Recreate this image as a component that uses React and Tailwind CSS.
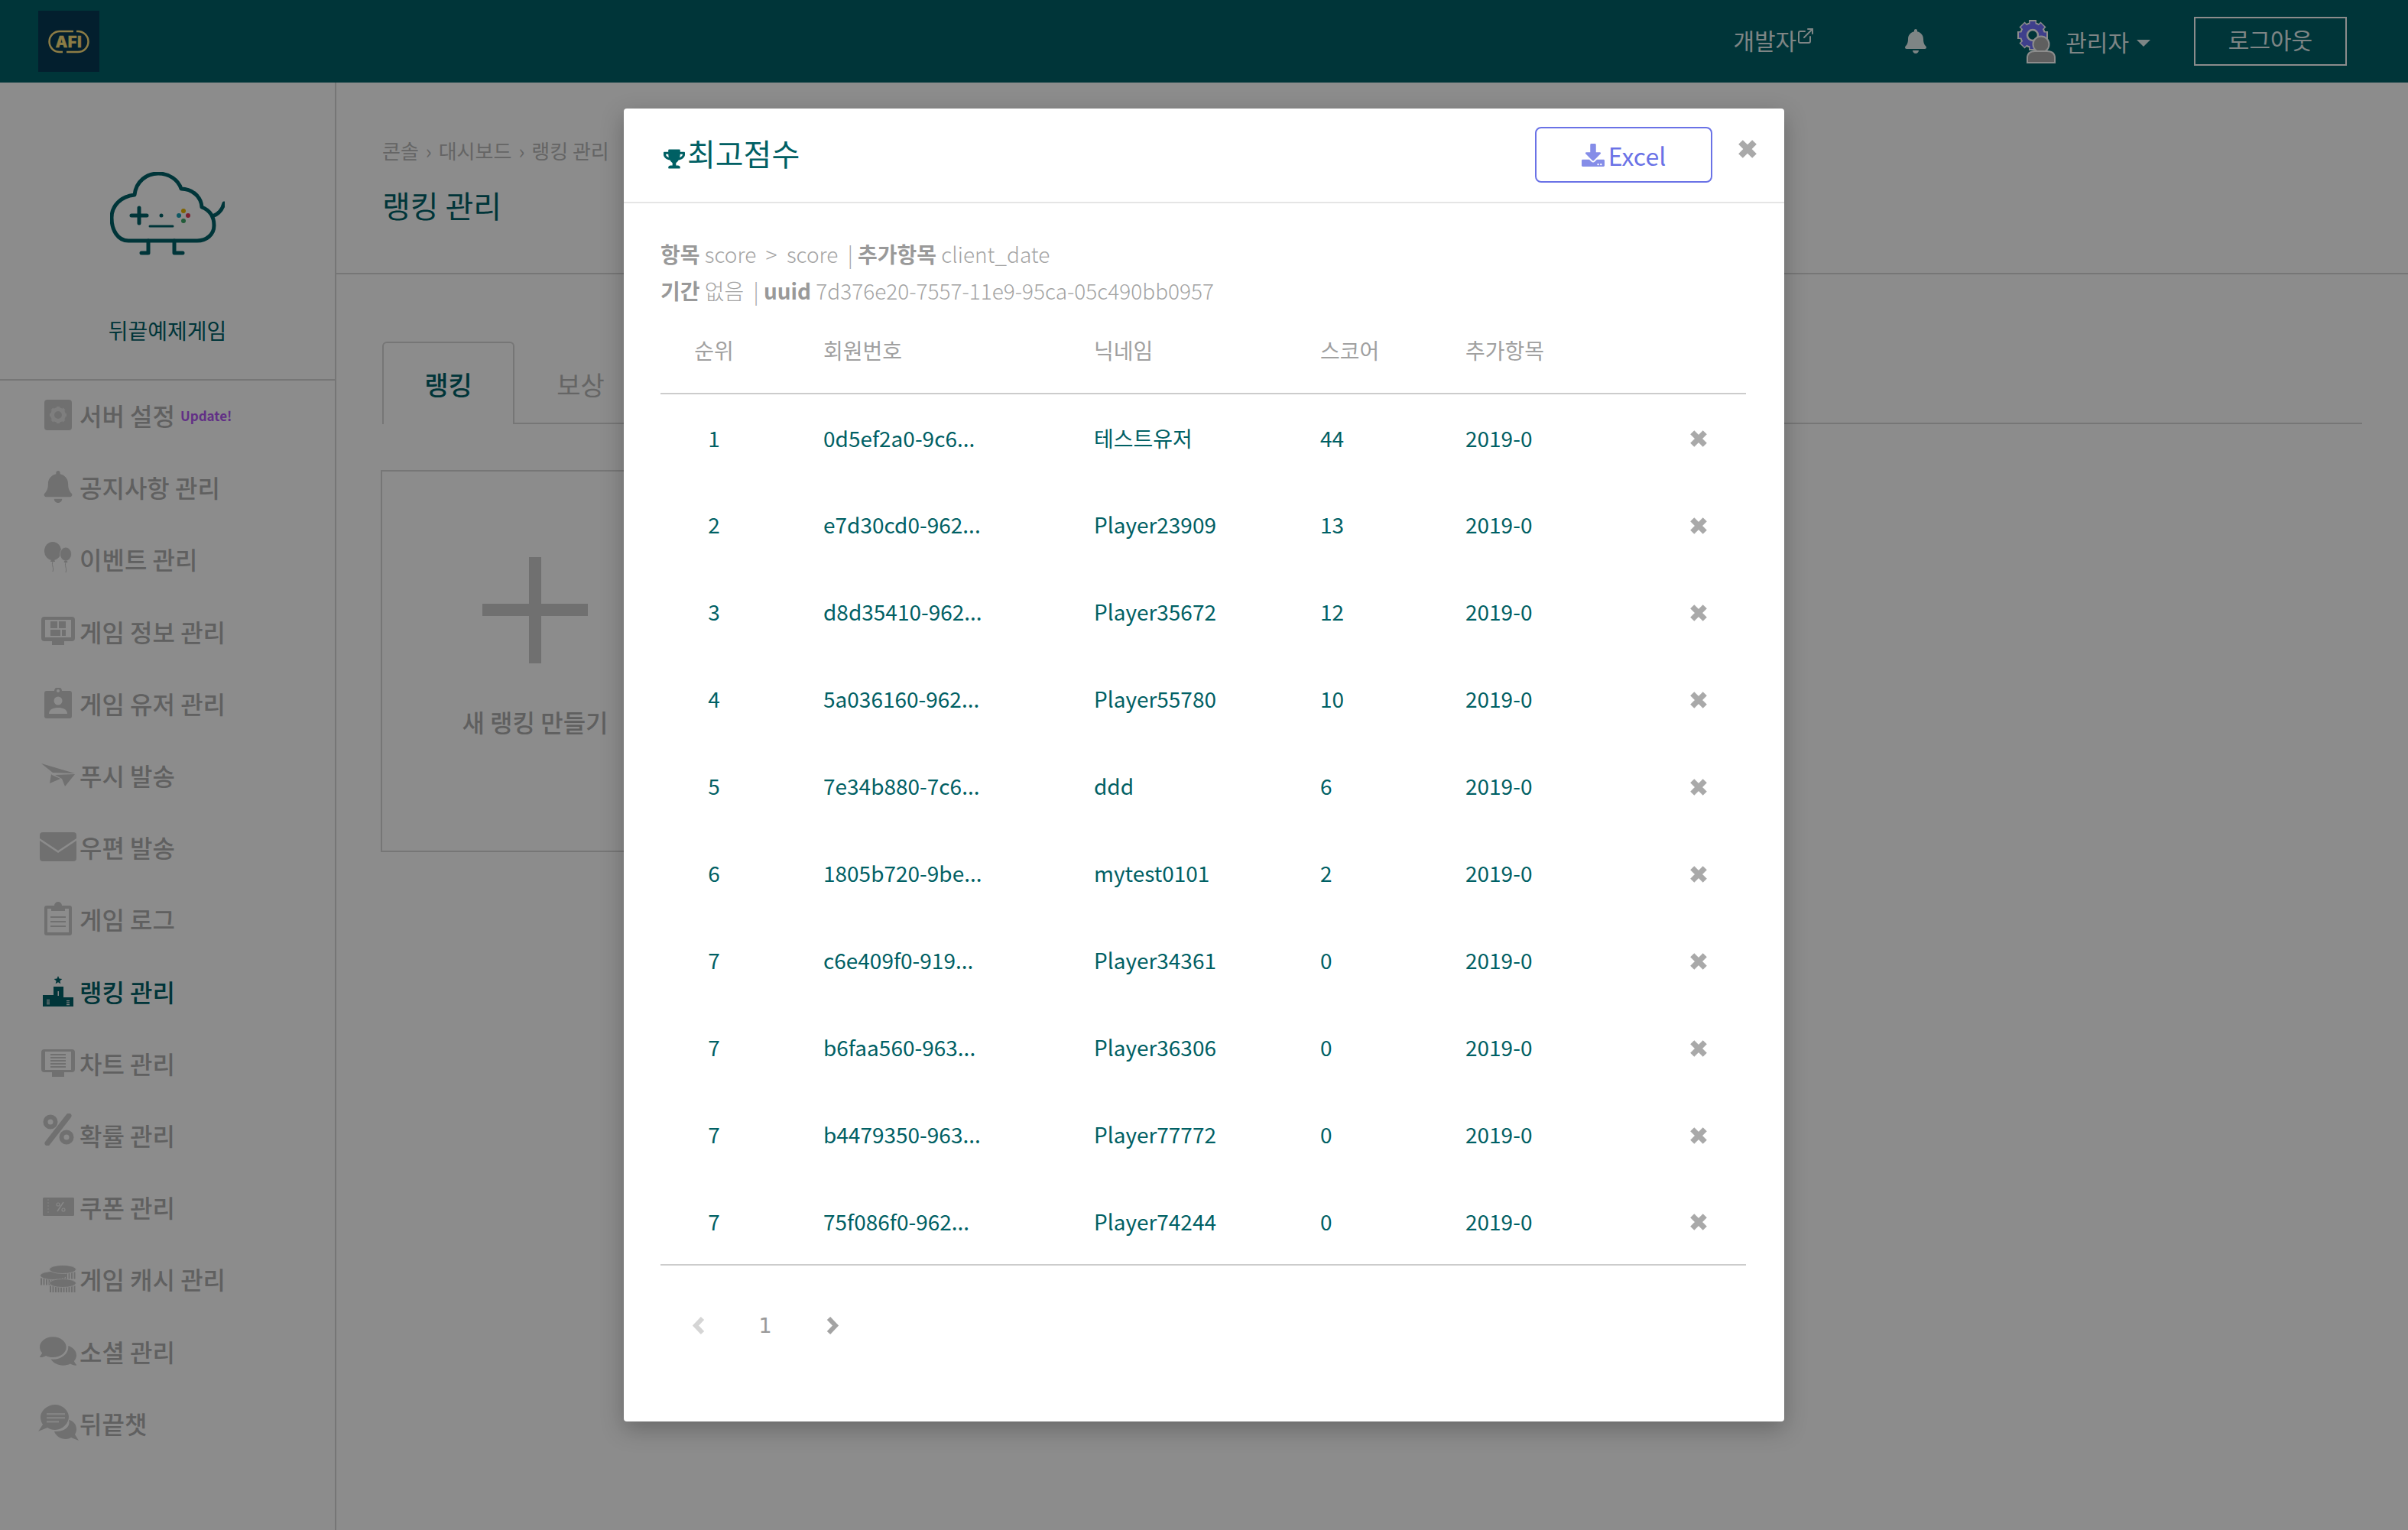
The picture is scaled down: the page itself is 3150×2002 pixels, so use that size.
import React from "react";
import { FaTrophy, FaBell, FaDownload, FaComments } from "react-icons/fa";
import { ExternalLink } from "lucide-react";

const rows = [
  { rank: 1, id: "0d5ef2a0-9c6...", name: "테스트유저", score: 44 },
  { rank: 2, id: "e7d30cd0-962...", name: "Player23909", score: 13 },
  { rank: 3, id: "d8d35410-962...", name: "Player35672", score: 12 },
  { rank: 4, id: "5a036160-962...", name: "Player55780", score: 10 },
  { rank: 5, id: "7e34b880-7c6...", name: "ddd", score: 6 },
  { rank: 6, id: "1805b720-9be...", name: "mytest0101", score: 2 },
  { rank: 7, id: "c6e409f0-919...", name: "Player34361", score: 0 },
  { rank: 7, id: "b6faa560-963...", name: "Player36306", score: 0 },
  { rank: 7, id: "b4479350-963...", name: "Player77772", score: 0 },
  { rank: 7, id: "75f086f0-962...", name: "Player74244", score: 0 },
];

const iconGray = "#cccccc";

function GearBox() {
  return (
    <svg width="36" height="40" viewBox="0 0 36 40">
      <rect width="36" height="40" rx="4" fill={iconGray} />
      <circle cx="18" cy="20" r="7.500" fill="none" stroke="#e6e6e6" strokeWidth="5" />
      <path d="M18 9v5M18 26v5M7 20h5M24 20h5M10 12l3.500 3.500M22.500 24.500L26 28M26 12l-3.500 3.500M13.500 24.500L10 28" stroke="#e6e6e6" strokeWidth="4" />
    </svg>
  );
}

function Balloons() {
  return (
    <svg width="36" height="44" viewBox="0 0 36 44" fill={iconGray}>
      <ellipse cx="11" cy="12" rx="11" ry="12" />
      <path d="M9 23h4l1 3H8z" />
      <path d="M11 26c-2 5 2 7 0 13" fill="none" stroke={iconGray} strokeWidth="1" />
      <ellipse cx="28" cy="16" rx="7.500" ry="9" stroke="#ffffff" strokeWidth="0.800" />
      <path d="M26.500 24.500h3l1 2.500h-5z" />
      <path d="M28 27c-2 5 2 7 0 13" fill="none" stroke={iconGray} strokeWidth="1" />
    </svg>
  );
}

function MonitorGrid() {
  return (
    <svg width="44" height="37" viewBox="0 0 44 37" fill={iconGray}>
      <path fillRule="evenodd" d="M4 0h36a4 4 0 0 1 4 4v24a4 4 0 0 1-4 4H4a4 4 0 0 1-4-4V4a4 4 0 0 1 4-4zm1 4v23h34V4z" />
      <rect x="14" y="32" width="16" height="5" />
      <rect x="12" y="6" width="9" height="9" />
      <rect x="23" y="6" width="9" height="9" />
      <rect x="12" y="17" width="13" height="8" />
      <rect x="27" y="17" width="5" height="8" />
    </svg>
  );
}

function Badge() {
  return (
    <svg width="36" height="40" viewBox="0 0 36 40" fill={iconGray}>
      <path fillRule="evenodd" d="M3 4h10a5 5 0 0 1 10 0h10a3 3 0 0 1 3 3v30a3 3 0 0 1-3 3H3a3 3 0 0 1-3-3V7a3 3 0 0 1 3-3zm15-2a2 2 0 1 0 0 4 2 2 0 0 0 0-4z" />
      <circle cx="18" cy="17" r="5.500" fill="#ffffff" />
      <path d="M6 34c0-6 6-8 12-8s12 2 12 8z" fill="#ffffff" />
    </svg>
  );
}

function Plane() {
  return (
    <svg width="44" height="30" viewBox="0 0 44 30" fill={iconGray}>
      <path d="M0 0L44 13L15 12Z" />
      <path d="M0 2L13 14L11 26L25 20L14 15Z" />
      <path d="M44 14L18 15L27 20L31 30Z" />
    </svg>
  );
}

function Mail() {
  return (
    <svg width="48" height="38" viewBox="0 0 48 38" fill={iconGray}>
      <path d="M4 0h40a4 4 0 0 1 4 4v4L24 24 0 8V4a4 4 0 0 1 4-4z" />
      <path d="M0 11l24 16 24-16v23a4 4 0 0 1-4 4H4a4 4 0 0 1-4-4z" />
    </svg>
  );
}

function Clipboard() {
  return (
    <svg width="36" height="44" viewBox="0 0 36 44" fill={iconGray}>
      <path fillRule="evenodd" d="M3 5h10a5 5 0 0 1 10 0h10a3 3 0 0 1 3 3v33a3 3 0 0 1-3 3H3a3 3 0 0 1-3-3V8a3 3 0 0 1 3-3zm1 4v31h28V9z" />
      <path d="M9 7h18v5H9z" />
      <path d="M8 19h20v2H8zM8 25h20v2H8zM8 31h20v2H8z" />
    </svg>
  );
}

function Podium() {
  return (
    <svg width="40" height="40" viewBox="0 0 40 40" fill="#006269">
      <path d="M20 0l1.500 3.500 3.800.4-2.900 2.500.9 3.800L20 8.200l-3.300 2 .9-3.800-2.900-2.500 3.800-.4z" />
      <rect x="14" y="14" width="13" height="26" />
      <rect x="0" y="25" width="14" height="15" />
      <rect x="27" y="28" width="13" height="12" />
      <path d="M19.500 20h1.500v6h-1.500zM5 31h4v1.200H5zM5 33.500h4v1.200H5zM5 36h4v1.200H5zM31 32h4v1.200h-4zM31 34.500h4v1.200h-4zM31 37h4v1.200h-4z" fill="#eeeeee" />
    </svg>
  );
}

function ChartBoard() {
  return (
    <svg width="44" height="36" viewBox="0 0 44 36" fill={iconGray}>
      <path fillRule="evenodd" d="M4 0h36a4 4 0 0 1 4 4v22a4 4 0 0 1-4 4H4a4 4 0 0 1-4-4V4a4 4 0 0 1 4-4zm1 3v24h34V3z" />
      <rect x="14" y="30" width="16" height="6" />
      <path d="M12 6h20v2H12zM12 10h20v2H12zM12 14h20v2H12zM12 18h20v2H12zM12 22h20v2H12z" />
    </svg>
  );
}

function Percent() {
  return (
    <svg width="41" height="42" viewBox="0 0 41 42" fill="none" stroke={iconGray} className="mb-[14px]">
      <path d="M34 3L6 39" strokeWidth="7" strokeLinecap="round" />
      <circle cx="10" cy="11" r="6.500" strokeWidth="6" />
      <circle cx="31" cy="31" r="6.500" strokeWidth="6" />
    </svg>
  );
}

function Coupon() {
  return (
    <svg width="41" height="24" viewBox="0 0 41 24">
      <rect width="41" height="24" rx="1.500" fill={iconGray} />
      <path d="M7 2v20" stroke="#eeeeee" strokeWidth="1" strokeDasharray="2 2" />
      <path d="M19 18l8-12" stroke="#f6f6f6" strokeWidth="1.500" />
      <circle cx="20" cy="9" r="2" fill="none" stroke="#f6f6f6" strokeWidth="1.200" />
      <circle cx="27" cy="16" r="2" fill="none" stroke="#f6f6f6" strokeWidth="1.200" />
    </svg>
  );
}

function Coin({ cx, cy }) {
  return (
    <g>
      <path d={`M${cx - 17} ${cy + 8}H${cx + 17}`} stroke={iconGray} strokeWidth="9" strokeDasharray="2 1.500" />
      <ellipse cx={cx} cy={cy} rx="17.500" ry="5.500" fill={iconGray} stroke="#ffffff" strokeWidth="0.800" />
    </g>
  );
}

function Coins() {
  return (
    <svg width="48" height="36" viewBox="0 0 48 36">
      <Coin cx={18} cy={14} />
      <Coin cx={30} cy={24} />
      <Coin cx={30} cy={6} />
    </svg>
  );
}

function ChatDots() {
  return (
    <svg width="53" height="48" viewBox="0 0 53 48" fill={iconGray}>
      <path d="M22 0c10 0 18 8 18 16s-8 17-18 17c-4 0-7-1-10-3L0 35l6-9c-2-3-3-6-3-10C3 8 12 0 22 0z" />
      <path d="M40 20c6 1 10 6 10 12 0 3-1 5-2 7l5 8-10-4c-2 1-4 2-7 2-7 0-13-4-15-10 11 1 22-5 19-15z" />
      <path d="M11 11h24v2.500H11zM11 16h24v2.500H11zM11 21h16v2.500H11z" fill="#eeeeee" />
    </svg>
  );
}

function CloseX({ className }) {
  return (
    <svg viewBox="0 0 24 24" fill="none" stroke="#a9a9a9" strokeWidth="8" className={className}>
      <path d="M3 3l18 18M21 3L3 21" />
    </svg>
  );
}

function ChevronLeft({ className }) {
  return (
    <svg width="17" height="25" viewBox="0 0 17 25" fill="none" stroke="currentColor" strokeWidth="6" className={className}>
      <path d="M14 3L5 12.500L14 22" />
    </svg>
  );
}

function ChevronRight({ className }) {
  return (
    <svg width="17" height="25" viewBox="0 0 17 25" fill="none" stroke="currentColor" strokeWidth="6" className={className}>
      <path d="M3 3L12 12.500L3 22" />
    </svg>
  );
}

const navItems = [
  { label: "서버 설정", icon: <GearBox />, update: true },
  { label: "공지사항 관리", icon: <FaBell className="text-[42px] text-[#cccccc]" /> },
  { label: "이벤트 관리", icon: <Balloons /> },
  { label: "게임 정보 관리", icon: <MonitorGrid /> },
  { label: "게임 유저 관리", icon: <Badge /> },
  { label: "푸시 발송", icon: <Plane /> },
  { label: "우편 발송", icon: <Mail /> },
  { label: "게임 로그", icon: <Clipboard /> },
  { label: "랭킹 관리", icon: <Podium />, active: true },
  { label: "차트 관리", icon: <ChartBoard /> },
  { label: "확률 관리", icon: <Percent /> },
  { label: "쿠폰 관리", icon: <Coupon /> },
  { label: "게임 캐시 관리", icon: <Coins /> },
  { label: "소셜 관리", icon: <FaComments className="text-[48px] text-[#cccccc]" /> },
  { label: "뒤끝챗", icon: <ChatDots /> },
];

function CloudLogo() {
  return (
    <svg width="150" height="110" viewBox="0 0 150 110" fill="none" stroke="#006269" strokeWidth="5" strokeLinecap="round" strokeLinejoin="round">
      <path d="M24 90C10 90 2 76 2 60c0-16 12-28 30-30C34 12 48 2 63 2c14 0 26 8 30 20 14 0 26 10 27 24 10 4 16 12 16 24 0 12-10 20-22 20z" />
      <path d="M134 58c8-3 13-9 15-17" />
      <path d="M50 90v16h-9M84 90v16h11" />
      <path d="M38 47v20M28 57h20" />
      <path d="M52 71h30" strokeWidth="3" />
      <circle cx="67" cy="57" r="2.500" fill="#006269" stroke="none" />
      <circle cx="96" cy="51" r="3" fill="#e8b400" stroke="none" />
      <circle cx="90" cy="57" r="3" fill="#1aa0b4" stroke="none" />
      <circle cx="102" cy="57" r="3" fill="#e03a58" stroke="none" />
      <circle cx="96" cy="64" r="3" fill="#3fa86a" stroke="none" />
    </svg>
  );
}

function AfiLogo() {
  return (
    <div className="w-[80px] h-[80px] bg-[#073a55] flex items-center justify-center">
      <svg width="56" height="31" viewBox="0 0 56 31" fill="none" stroke="#ffe27f" strokeWidth="2.500">
        <path d="M34 2H16a13.500 13.500 0 0 0 0 27h4M25 29h15a13.500 13.500 0 0 0 0-27h-2" />
        <text x="28" y="22.500" textAnchor="middle" fontSize="20" fontWeight="800" letterSpacing="0.500" fill="#ffe27f" stroke="#ffe27f" strokeWidth="0.500" fontFamily="Inter, sans-serif">AFI</text>
      </svg>
    </div>
  );
}

function AdminIcon() {
  return (
    <svg width="52" height="58" viewBox="0 0 52 58" className="block">
      <g stroke="#ffffff" fill="#ffffff">
        <circle cx="22" cy="21" r="15.500" strokeWidth="3" />
        <path d="M22 1v40M2 21h40M8 7l28 28M36 7L8 35" strokeWidth="10" />
      </g>
      <circle cx="22" cy="21" r="15" fill="#7373ff" />
      <path d="M22 3v36M4 21h36M9 8l26 26M35 8L9 34" stroke="#7373ff" strokeWidth="7" />
      <circle cx="22" cy="21" r="7" fill="#006269" stroke="#ffffff" strokeWidth="2.500" />
      <circle cx="33" cy="33" r="10.500" fill="#aeaeae" stroke="#ffffff" strokeWidth="2" />
      <path d="M15 57v-6c0-6 4-9 10-9h16c6 0 10 3 10 9v6z" fill="#aeaeae" stroke="#ffffff" strokeWidth="2" />
    </svg>
  );
}

export default function App() {
  return (
    <div className="relative h-screen overflow-hidden bg-white font-['Noto_Sans_CJK_KR','Noto_Sans',sans-serif]">
      <header className="h-[108px] bg-[#006269] flex items-center pl-[50px] pr-[80px]">
        <AfiLogo />
        <div className="ml-auto flex items-center text-[#e6f2f2] text-[30px]">
          <span className="flex items-start mb-[4px]">
            개발자
            <ExternalLink className="w-[24px] h-[24px] mt-[5px]" strokeWidth={2} />
          </span>
          <FaBell className="ml-[116px] text-[32px] text-[#e6f2f2]" />
          <span className="ml-[115px]"><AdminIcon /></span>
          <span className="ml-[13px]">관리자</span>
          <span className="ml-[10px] mt-[4px] w-0 h-0 border-x-[9px] border-x-transparent border-t-[9px] border-t-[#e6f2f2]" />
          <button className="ml-[57px] w-[200px] h-[64px] border-2 border-[#ffffff] text-[#e6f2f2] pb-[6px]">로그아웃</button>
        </div>
      </header>

      <div className="flex h-[1894px]">
        <aside className="w-[440px] shrink-0 border-r-2 border-[#d8d8d8]">
          <div className="h-[390px] border-b-2 border-[#d8d8d8] flex flex-col items-center">
            <div className="mt-[117px]"><CloudLogo /></div>
            <p className="mt-[76px] text-[28px] text-[#006269]">뒤끝예제게임</p>
          </div>
          <nav className="-mt-[2px]">
            {navItems.map((item) => (
              <div key={item.label} className="h-[94.2px] flex items-center pl-[48px]">
                <span className="w-[56px] flex justify-center shrink-0">{item.icon}</span>
                <span className={item.active ? "text-[32px] text-[#006269] font-medium" : "text-[32px] text-[#b0b0b0] font-medium"}>{item.label}</span>
                {item.update && <span className="ml-[7px] mt-[2px] text-[17px] font-bold text-[#b257f5]">Update!</span>}
              </div>
            ))}
          </nav>
        </aside>

        <main className="flex-1">
          <div className="h-[251px] border-b-2 border-[#d8d8d8] pl-[60px] pt-[66px]">
            <p className="flex items-center gap-[9px] text-[26px] text-[#b8b8b8] leading-[46px]">
              <span>콘솔</span>
              <span>›</span>
              <span>대시보드</span>
              <span>›</span>
              <span>랭킹 관리</span>
            </p>
            <h1 className="mt-[18px] text-[40px] text-[#006269]">랭킹 관리</h1>
          </div>
          <div className="pl-[60px] pr-[60px] pt-[90px]">
            <div className="flex items-end border-b-2 border-[#d8d8d8] h-[106px]">
              <div className="w-[173px] h-[108px] -mb-[2px] border-2 border-b-0 border-[#d8d8d8] rounded-t-[6px] bg-white flex items-center justify-center text-[34px] text-[#006269] font-medium">랭킹</div>
              <div className="w-[173px] h-[106px] pt-[4px] flex items-center justify-center text-[34px] text-[#b8b8b8]">보상</div>
            </div>
            <div className="-ml-[2px] mt-[60px] w-[404px] h-[500px] border-2 border-[#d8d8d8] flex flex-col items-center">
              <div className="relative mt-[112px] w-[138px] h-[139px]">
                <div className="absolute left-[61px] top-0 w-[16px] h-[139px] bg-[#cccccc]" />
                <div className="absolute left-0 top-[61px] w-[138px] h-[16px] bg-[#cccccc]" />
              </div>
              <p className="mt-[52px] text-[32px] text-[#aeaeae] font-medium">새 랭킹 만들기</p>
            </div>
          </div>
        </main>
      </div>

      <div className="absolute inset-0 bg-black/45">
        <div className="mx-auto mt-[142px] w-[1518px] h-[1718px] bg-white rounded-[4px] shadow-[0_10px_30px_rgba(0,0,0,0.25)]">
          <div className="h-[124px] border-b-2 border-[#e5e5e5] flex items-start pl-[52px] pr-[36px]">
            <FaTrophy className="mt-[52px] text-[28px] text-[#006064]" />
            <h2 className="ml-[3px] mt-[28px] text-[40px] leading-[60px] text-[#006064]">최고점수</h2>
            <button className="ml-auto mt-[24px] w-[232px] h-[73px] border-2 border-[#6a72e6] rounded-[8px] flex items-center justify-center text-[32px] text-[#6a72e6]">
              <FaDownload className="text-[30px] text-[#858de8] mr-[5px]" />
              Excel
            </button>
            <CloseX className="ml-[34px] mt-[41px] w-[24px] h-[24px]" />
          </div>

          <div className="px-[48px]">
            <div className="pt-[42px] text-[#a4a4a4] text-[28px] leading-[48px] font-light">
              <p><b className="font-bold text-[#999999]">항목</b> score &nbsp;&gt;&nbsp; score &nbsp;|&nbsp;<b className="font-bold text-[#999999]">추가항목</b> client_date</p>
              <p><b className="font-bold text-[#999999]">기간</b> 없음 &nbsp;|&nbsp;<b className="font-bold text-[#999999]">uuid</b> 7d376e20-7557-11e9-95ca-05c490bb0957</p>
            </div>

            <table className="w-[1420px] table-fixed text-[28px] text-[#006064]">
              <thead>
                <tr className="h-[111px] border-b-2 border-[#cccccc] text-[#a0a0a0] text-left">
                  <th className="w-[213px] pr-[73px] pb-[3px] text-center font-normal">순위</th>
                  <th className="w-[354px] pb-[3px] font-normal">회원번호</th>
                  <th className="w-[296px] pb-[3px] font-normal">닉네임</th>
                  <th className="w-[190px] pb-[3px] font-normal">스코어</th>
                  <th className="w-[264px] pb-[3px] font-normal">추가항목</th>
                  <th className="pb-[3px]" />
                </tr>
              </thead>
              <tbody className="border-b-2 border-[#cccccc]">
                {rows.map((row) => (
                  <tr key={row.id} className="h-[114px]">
                    <td className="pr-[73px] text-center">{row.rank}</td>
                    <td>{row.id}</td>
                    <td>{row.name}</td>
                    <td>{row.score}</td>
                    <td>2019-0</td>
                    <td><CloseX className="ml-[30px] mt-[3px] w-[22px] h-[22px]" /></td>
                  </tr>
                ))}
              </tbody>
            </table>

            <div className="mt-[66px] flex items-center">
              <ChevronLeft className="ml-[41px] text-[#d5d5d5]" />
              <span className="ml-[69px] w-[20px] text-center text-[27px] leading-[25px] font-['DejaVu_Sans',sans-serif] text-[#999999]">1</span>
              <ChevronRight className="ml-[70px] text-[#a3a3a3]" />
            </div>
          </div>
        </div>
      </div>
    </div>
  );
}
